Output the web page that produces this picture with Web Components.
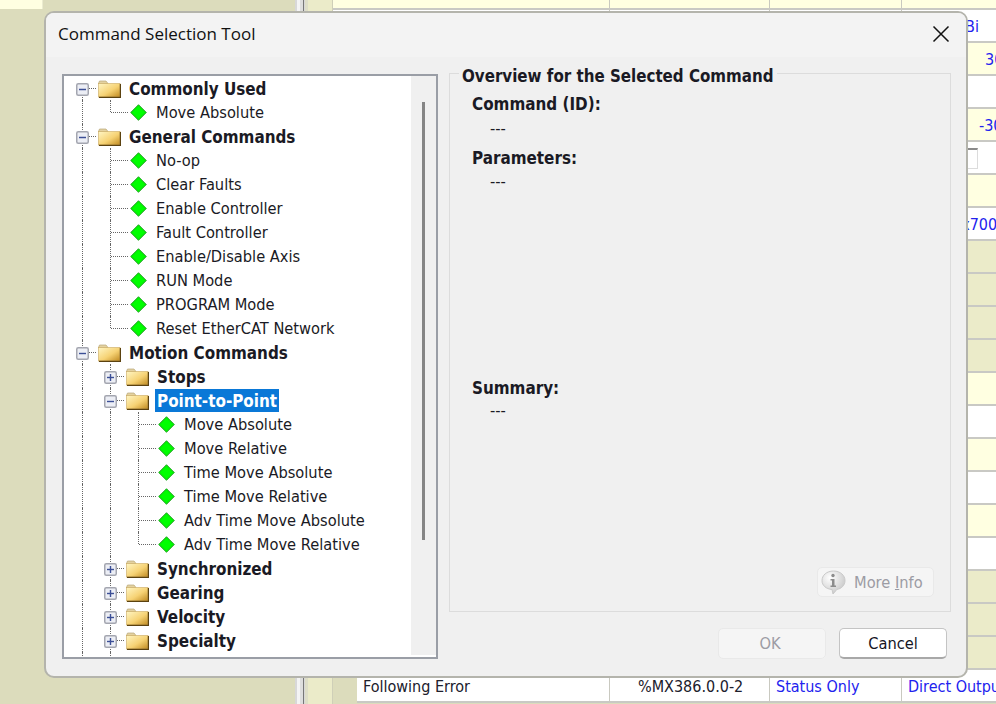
<!DOCTYPE html>
<html>
<head>
<meta charset="utf-8">
<title>Command Selection Tool</title>
<style>
  html, body { margin: 0; padding: 0; height: 100%; overflow: hidden; }
  body { font-family: "DejaVu Sans", sans-serif; }
</style>
</head>
<body>
<app-desktop>
  <grid-row h="10" c="cream"></grid-row>
  <grid-row c="white" d="Bi" pad="63" blue></grid-row>
  <grid-row c="cream" d="30" pad="83" blue></grid-row>
  <grid-row c="white"></grid-row>
  <grid-row c="cream" d="-30" pad="77" blue></grid-row>
  <grid-row c="white" check></grid-row>
  <grid-row c="cream"></grid-row>
  <grid-row c="white" d="0x700" pad="50" blue></grid-row>
  <grid-row c="olive"></grid-row>
  <grid-row c="olive"></grid-row>
  <grid-row c="olive"></grid-row>
  <grid-row c="olive"></grid-row>
  <grid-row c="cream"></grid-row>
  <grid-row c="white"></grid-row>
  <grid-row c="cream"></grid-row>
  <grid-row c="white"></grid-row>
  <grid-row c="cream"></grid-row>
  <grid-row c="white"></grid-row>
  <grid-row c="olive"></grid-row>
  <grid-row c="olive"></grid-row>
  <grid-row c="olive"></grid-row>
  <grid-row c="white" indent a="Following Error" b="%MX386.0.0-2" e="Status Only" d="Direct Output" pad="6" blue></grid-row>

  <cmd-dialog slot="window" heading="Command Selection Tool">
    <tree-view>
      <tree-row kind="minus" guides="" first>Commonly Used</tree-row>
      <tree-row kind="leaf" guides="i,l">Move Absolute</tree-row>
      <tree-row kind="minus" guides="">General Commands</tree-row>
      <tree-row kind="leaf" guides="i,t">No-op</tree-row>
      <tree-row kind="leaf" guides="i,t">Clear Faults</tree-row>
      <tree-row kind="leaf" guides="i,t">Enable Controller</tree-row>
      <tree-row kind="leaf" guides="i,t">Fault Controller</tree-row>
      <tree-row kind="leaf" guides="i,t">Enable/Disable Axis</tree-row>
      <tree-row kind="leaf" guides="i,t">RUN Mode</tree-row>
      <tree-row kind="leaf" guides="i,t">PROGRAM Mode</tree-row>
      <tree-row kind="leaf" guides="i,l">Reset EtherCAT Network</tree-row>
      <tree-row kind="minus" guides="">Motion Commands</tree-row>
      <tree-row kind="plus" guides="i">Stops</tree-row>
      <tree-row kind="minus" guides="i" selected>Point-to-Point</tree-row>
      <tree-row kind="leaf" guides="i,i,t">Move Absolute</tree-row>
      <tree-row kind="leaf" guides="i,i,t">Move Relative</tree-row>
      <tree-row kind="leaf" guides="i,i,t">Time Move Absolute</tree-row>
      <tree-row kind="leaf" guides="i,i,t">Time Move Relative</tree-row>
      <tree-row kind="leaf" guides="i,i,t">Adv Time Move Absolute</tree-row>
      <tree-row kind="leaf" guides="i,i,l">Adv Time Move Relative</tree-row>
      <tree-row kind="plus" guides="i">Synchronized</tree-row>
      <tree-row kind="plus" guides="i">Gearing</tree-row>
      <tree-row kind="plus" guides="i">Velocity</tree-row>
      <tree-row kind="plus" guides="i">Specialty</tree-row>
      <tree-row kind="none" guides="i,i"></tree-row>
    </tree-view>
    <overview-group slot="side"></overview-group>
  </cmd-dialog>
</app-desktop>

<script>
const FONT = '"DejaVu Sans", sans-serif';

// background grid that shows behind the dialog
class GridRow extends HTMLElement {
  constructor() {
    super();
    this.attachShadow({ mode: 'open' });
  }

  connectedCallback() {
    const a = (n) => this.getAttribute(n) || '';
    const h = a('h') || 33;
    const box = this.hasAttribute('check')
      ? '<i class="check"></i>' : '';
    this.shadowRoot.innerHTML = `
      <style>
        :host { display: grid; grid-template-columns: 277px 160px 132px 94px; height: ${h}px;
          font: 16px ${FONT}; font-stretch: condensed; color: #20202c; box-sizing: border-box; }
        div { border-right: 1px solid #c9c9c0; border-bottom: 2px solid #c9c9c4; overflow: hidden;
          white-space: nowrap; box-sizing: border-box; line-height: 33px; position: relative; }
        div:last-child { border-right: 0; }
        div.cream { background: #ffffe1; }
        div.white { background: #fff; }
        div.olive { background: #ebebc9; }
        .a { padding-left: 6px; }
        .b { padding-left: 28px; }
        .e, .d { color: #2222ee; padding-left: 6px; }
        .d { padding-left: ${a('pad') || 5}px; }
        :host([indent]) .a { margin-left: 24px; }
        .check { position: absolute; left: 64px; top: 6px; width: 10px; height: 18px;
          border: 1px solid #dcdcdc; border-top: 2px solid #8a8a8a; background: #fff; }
      </style>
      <div class="a ${a('c')}">${a('a')}</div>
      <div class="b ${a('c')}">${a('b')}</div>
      <div class="e ${a('c')}">${a('e')}</div>
      <div class="d ${a('c')}">${a('d')}${box}</div>`;
  }
}
customElements.define('grid-row', GridRow);

const desktopTemplate = document.createElement('template');
desktopTemplate.innerHTML = `
  <style>
    :host { display: grid; grid-template-columns: 295px 13px 25px 1fr; width: 996px; height: 704px;
      background: #dcdcbc; position: relative; overflow: hidden; }
    .corner { width: 42px; height: 9px; background: #ffffe1; border-right: 1px solid #ebebd0; }
    .gutter { background: linear-gradient(90deg, #d8d8d8 0 2px, #f4f4f4 2px 5px, #dedede 5px 8px, #777 8px 9px, #d8d8d8 9px 10px, #dedec8 10px 13px); }
    .strip { background: #ebebc9; border-right: 1px solid #cfcfb8; box-sizing: border-box; }
    .table { display: flex; flex-direction: column; }
  </style>
  <div class="left"><div class="corner"></div></div>
  <div class="gutter"></div>
  <div class="strip"></div>
  <div class="table"><slot></slot></div>
  <slot name="window"></slot>
`;

class AppDesktop extends HTMLElement {
  constructor() {
    super();
    this.attachShadow({ mode: 'open' });
    this.shadowRoot.appendChild(desktopTemplate.content.cloneNode(true));
  }
}
customElements.define('app-desktop', AppDesktop);

const dialogTemplate = document.createElement('template');
dialogTemplate.innerHTML = `
  <style>
    :host { display: block; position: absolute; left: 44px; top: 11px; width: 924px; height: 667px;
      box-sizing: border-box; background: #f0f0f0; border: 2px solid #b4b4ac; border-radius: 10px;
      overflow: hidden; }
    .title { display: flex; align-items: center; justify-content: space-between; height: 44px;
      padding: 0 16px 0 12px; background: #f3f3f3; }
    .title span { font: 17px "Open Sans", sans-serif; color: #111; padding-bottom: 4px; }
    .title svg { display: block; margin-bottom: 3px; }
    .body { display: flex; gap: 11px; padding: 17px 0 0 16px; }
  </style>
  <div class="title">
    <span class="heading"></span>
    <svg width="18" height="18" viewBox="0 0 18 18"><path d="M1.5 1.5 L16.5 16.5 M16.5 1.5 L1.5 16.5" stroke="#111" stroke-width="1.5" fill="none"/></svg>
  </div>
  <div class="body">
    <slot></slot>
    <slot name="side"></slot>
  </div>
`;

class CmdDialog extends HTMLElement {
  constructor() {
    super();
    this.attachShadow({ mode: 'open' });
    this.shadowRoot.appendChild(dialogTemplate.content.cloneNode(true));
  }

  connectedCallback() {
    this.shadowRoot.querySelector('.heading').textContent = this.getAttribute('heading');
  }
}
customElements.define('cmd-dialog', CmdDialog);

const treeTemplate = document.createElement('template');
treeTemplate.innerHTML = `
  <style>
    :host { display: flex; width: 376px; height: 585px; box-sizing: border-box; flex: none;
      border: 2px solid #9a9ea6; background: #fff; overflow: hidden; }
    .list { width: 347px; padding-left: 4px; box-sizing: border-box; overflow: hidden; }
    .scroll { width: 25px; height: 579px; background: #f0f0f0; padding: 26px 0 0 11px; box-sizing: border-box; }
    .thumb { width: 3px; height: 438px; background: #858585; }
  </style>
  <div class="list"><slot></slot></div>
  <div class="scroll"><div class="thumb"></div></div>
`;

class TreeView extends HTMLElement {
  constructor() {
    super();
    this.attachShadow({ mode: 'open' });
    this.shadowRoot.appendChild(treeTemplate.content.cloneNode(true));
  }
}
customElements.define('tree-view', TreeView);

const FOLDER = `<svg class="icon" width="23" height="18" viewBox="0 0 23 18">
  <defs><linearGradient id="f" x1="0" y1="0" x2="1" y2="1">
    <stop offset="0" stop-color="#fff6c4"/><stop offset=".55" stop-color="#f6d274"/><stop offset="1" stop-color="#c08a20"/>
  </linearGradient></defs>
  <path d="M.5 3.5 L1.5 1 H8 L10 3.5 Z" fill="#e4d2a0" stroke="#b8a878" stroke-width=".7"/>
  <rect x=".5" y="3.5" width="21.5" height="13.5" fill="url(#f)" stroke="#caa860" stroke-width=".6"/>
  <path d="M1 17.3 H22.4 V4" fill="none" stroke="#5b4210" stroke-width="1.2"/>
</svg>`;

const DIAMOND = `<svg class="icon" width="17" height="17" viewBox="0 0 17 17">
  <path d="M8.5 .7 L16.3 8.5 L8.5 16.3 L.7 8.5 Z" fill="#00f000" stroke="#2ea52e" stroke-width="1"/>
  <path d="M8.5 2.5 L14.5 8.5 L8.5 14.5 L2.5 8.5 Z" fill="#00ff00"/>
</svg>`;

class TreeRow extends HTMLElement {
  constructor() {
    super();
    this.attachShadow({ mode: 'open' });
  }

  connectedCallback() {
    const kind = this.getAttribute('kind');
    const guides = (this.getAttribute('guides') || '').split(',').filter(Boolean);
    const cells = guides.map((g) => `<b class="cell ${g}"></b>`).join('');
    let body = '';
    if (kind === 'leaf') {
      body = `${DIAMOND}<span class="text"><slot></slot></span>`;
    } else if (kind === 'plus' || kind === 'minus') {
      const bar = kind === 'plus' ? '<path d="M6.5 3 V10" stroke="#3c4f96" stroke-width="1.4"/>' : '';
      body = `<b class="cell box">
          <svg width="13" height="13" viewBox="0 0 13 13">
            <rect x=".75" y=".75" width="11.5" height="11.5" rx="1.5" fill="#eceef5" stroke="#a4a6b0" stroke-width="1.5"/>
            <path d="M3 6.5 H10" stroke="#3c4f96" stroke-width="1.4"/>${bar}
          </svg></b>
        ${FOLDER}<span class="text bold"><slot></slot></span>`;
    }
    this.shadowRoot.innerHTML = `
      <style>
        :host { display: flex; align-items: flex-start; height: 24px; font: 16.3px ${FONT}; font-stretch: condensed; color: #1a1a24; white-space: nowrap; }
        .cell { flex: none; width: 28px; height: 24px; position: relative; display: block; }
        .i::before, .t::before, .l::before, .box::before { content: ""; position: absolute; left: 14px; top: 0; bottom: 0; border-left: 1px dotted #666; }
        .l::before { bottom: 12px; }
        .t::after, .l::after, .box::after { content: ""; position: absolute; left: 15px; right: -4px; top: 12px; border-top: 1px dotted #666; }
        :host([first]) .box::before { top: 12px; }
        .box svg { position: absolute; left: 8px; top: 7px; }
        .box::after { left: 21px; right: 0; }
        .icon { flex: none; display: block; }
        svg.icon[width="23"] { margin: 4px 0 0 2px; }
        svg.icon[width="17"] { margin: 4px 0 0 6px; }
        .text { margin: 1px 0 0 9px; line-height: 23px; height: 23px; padding-right: 2px; }
        .bold { font-weight: bold; font-size: 16.9px; margin-left: 6px; padding-left: 2px; line-height: 25px; }
        :host([selected]) .bold { background: #0a78d7; color: #fff; padding-right: 2px; }
      </style>
      ${cells}${body}`;
  }
}
customElements.define('tree-row', TreeRow);

const groupTemplate = document.createElement('template');
groupTemplate.innerHTML = `
  <style>
    :host { display: flex; flex-direction: column; width: 502px; margin-top: -1px; flex: none;
      font: 16.3px ${FONT}; font-stretch: condensed; color: #1a1a24; }
    .box { height: 539px; box-sizing: border-box; padding: 20px 16px 0 22px;
      border: 1px solid #dcdcdc; position: relative; }
    .legend { position: absolute; left: 9px; top: -8px; background: #f0f0f0; padding: 0 3px;
      font-weight: bold; font-size: 16.8px; line-height: 20px; }
    h4 { font-size: 16.9px; margin: 0; line-height: 20px; }
    p { margin: 4px 0 0; line-height: 20px; padding-left: 18px; }
    p.first { margin-top: 5px; }
    p.last { margin-top: 3px; }
    .two { margin-top: 9px; }
    .gap { margin-top: 186px; }
    .more { position: absolute; right: 16px; bottom: 14px; }
    .actions { display: flex; justify-content: flex-end; gap: 13px; padding: 16px 4px 0 0; }
  </style>
  <div class="box">
    <div class="legend">Overview for the Selected Command</div>
    <h4>Command (ID):</h4>
    <p class="first">---</p>
    <h4 class="two">Parameters:</h4>
    <p>---</p>
    <h4 class="gap">Summary:</h4>
    <p class="last">---</p>
    <div class="more"><win-button w="117" h="30" disabled info><u>I</u>nfo</win-button></div>
  </div>
  <div class="actions">
    <win-button w="108" h="31" disabled style="padding-right: 4px">OK</win-button>
    <win-button w="108" h="31">Cancel</win-button>
  </div>
`;

class OverviewGroup extends HTMLElement {
  constructor() {
    super();
    this.attachShadow({ mode: 'open' });
    this.shadowRoot.appendChild(groupTemplate.content.cloneNode(true));
  }
}
customElements.define('overview-group', OverviewGroup);

const INFO = `<svg width="27" height="26" viewBox="0 0 27 26">
  <defs><radialGradient id="g" cx=".35" cy=".3" r=".8"><stop offset="0" stop-color="#fff"/><stop offset="1" stop-color="#c4c4c4"/></radialGradient></defs>
  <path d="M13.5 2 C20.5 2 25 6.5 25 11.5 C25 16.5 21 20 17 20.3 L13 25 L12 20.5 C6 20 2 16.5 2 11.5 C2 6.5 6.5 2 13.5 2 Z" fill="url(#g)" stroke="#c8c8c8"/>
  <circle cx="13" cy="6.5" r="1.7" fill="#8c8c8c"/>
  <path d="M10.5 10 H14.5 V16.5 H16 V18 H10.5 V16.5 H12 V11.5 H10.5 Z" fill="#8c8c8c"/>
</svg>`;

class WinButton extends HTMLElement {
  constructor() {
    super();
    this.attachShadow({ mode: 'open' });
  }

  connectedCallback() {
    const info = this.hasAttribute('info');
    this.shadowRoot.innerHTML = `
      <style>
        :host { display: flex; align-items: center; justify-content: center; box-sizing: border-box;
          width: ${this.getAttribute('w')}px; height: ${this.getAttribute('h')}px; flex: none;
          background: #fff; border: 1px solid #c4c4c4; border-bottom: 2px solid #a8a8a8; border-radius: 5px;
          font: 16.3px ${FONT}; font-stretch: condensed; color: #15151f; }
        :host([disabled]) { background: #f5f5f5; border: 1px solid #e9e9e9; color: #9c9ca4; }
        :host([info]) { justify-content: flex-start; padding-left: 2px; gap: 7px; }
        svg { display: block; }
      </style>
      ${info ? INFO + '<span>More <slot></slot></span>' : '<slot></slot>'}`;
  }
}
customElements.define('win-button', WinButton);
</script>
</body>
</html>
